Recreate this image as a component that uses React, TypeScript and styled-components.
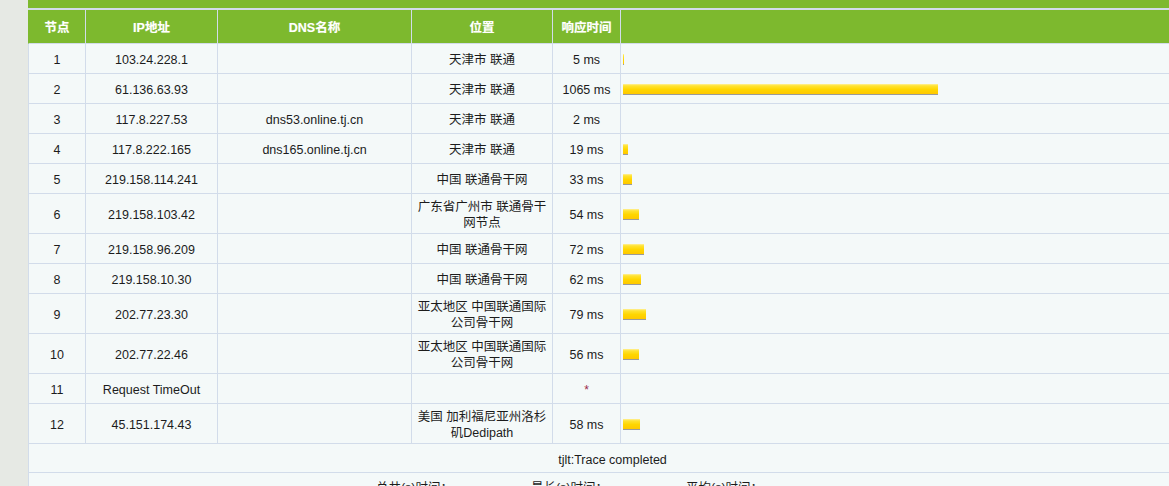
import React from "react";
import styled, { createGlobalStyle } from "styled-components";

const GlobalStyle = createGlobalStyle`
  html, body {
    margin: 0;
    padding: 0;
    background: #e6e9e4;
    overflow: hidden;
  }
  body {
    font-family: "Liberation Sans", "Noto Sans CJK SC", sans-serif;
    font-size: 12.5px;
    color: #1c1c1c;
  }
`;

const COLS = "57px 132px 194px 141px 68px 576px";
const GREEN = "#7db92e";
const LINE = "#d2dcea";

const Page = styled.div`
  padding-left: 28px;
  width: 1168px;
`;

const TitleBar = styled.div`
  height: 8px;
  background: ${GREEN};
  border-bottom: 2px solid ${LINE};
`;

const HeaderRow = styled.div`
  display: grid;
  grid-template-columns: ${COLS};
  background: ${GREEN};
  border-left: 1px solid ${GREEN};
  border-bottom: 1px solid ${LINE};
`;

const HeadCell = styled.div`
  height: 33px;
  display: flex;
  align-items: center;
  justify-content: center;
  color: #ffffff;
  font-weight: bold;
  font-size: 12.5px;
  border-right: 1px solid ${LINE};
  text-shadow: 0 0 1px rgba(255, 255, 255, 0.4);
  &:last-child {
    border-right: none;
  }
`;

const Row = styled.div`
  display: grid;
  grid-template-columns: ${COLS};
  background: #f4f9f9;
  border-left: 1px solid ${LINE};
  border-bottom: 1px solid ${LINE};
`;

const Cell = styled.div<{ $align?: "center" | "left" }>`
  min-height: 29px;
  box-sizing: border-box;
  padding: 5px 4px 2px;
  display: flex;
  align-items: center;
  justify-content: ${(p) => (p.$align === "left" ? "flex-start" : "center")};
  text-align: center;
  line-height: 16px;
  border-right: 1px solid ${LINE};
  &:last-child {
    border-right: none;
  }
`;

const BarCell = styled(Cell)`
  padding: 1px 2px 0;
`;

const Star = styled.span`
  color: #9b2a4a;
  font-size: 12px;
`;

const Bar = styled.div`
  height: 10px;
  background: linear-gradient(
    to bottom,
    #fff09a 0%,
    #ffe333 18%,
    #ffd600 55%,
    #ffc800 100%
  );
  border-bottom: 1px solid #9a9a9a;
`;

const WideRow = styled.div`
  min-height: 29px;
  box-sizing: border-box;
  padding: 5px 4px 2px;
  display: flex;
  align-items: center;
  justify-content: center;
  line-height: 16px;
  background: #f4f9f9;
  border-left: 1px solid ${LINE};
  border-bottom: 1px solid ${LINE};
`;

const SummaryRow = styled(WideRow)`
  gap: 78px;
  padding: 7px 86px 2px 0;
  align-items: flex-start;
`;

type Hop = {
  n: number;
  ip: string;
  dns: string;
  loc: string;
  ms: number | null;
};

const hops: Hop[] = [
  { n: 1, ip: "103.24.228.1", dns: "", loc: "天津市 联通", ms: 5 },
  { n: 2, ip: "61.136.63.93", dns: "", loc: "天津市 联通", ms: 1065 },
  { n: 3, ip: "117.8.227.53", dns: "dns53.online.tj.cn", loc: "天津市 联通", ms: 2 },
  { n: 4, ip: "117.8.222.165", dns: "dns165.online.tj.cn", loc: "天津市 联通", ms: 19 },
  { n: 5, ip: "219.158.114.241", dns: "", loc: "中国 联通骨干网", ms: 33 },
  { n: 6, ip: "219.158.103.42", dns: "", loc: "广东省广州市 联通骨干网节点", ms: 54 },
  { n: 7, ip: "219.158.96.209", dns: "", loc: "中国 联通骨干网", ms: 72 },
  { n: 8, ip: "219.158.10.30", dns: "", loc: "中国 联通骨干网", ms: 62 },
  { n: 9, ip: "202.77.23.30", dns: "", loc: "亚太地区 中国联通国际公司骨干网", ms: 79 },
  { n: 10, ip: "202.77.22.46", dns: "", loc: "亚太地区 中国联通国际公司骨干网", ms: 56 },
  { n: 11, ip: "Request TimeOut", dns: "", loc: "", ms: null },
  { n: 12, ip: "45.151.174.43", dns: "", loc: "美国 加利福尼亚州洛杉矶Dedipath", ms: 58 },
];

const barWidth = (ms: number) => Math.max(0, Math.round(ms * 0.2958 - 0.3));

export default function App() {
  return (
    <>
      <GlobalStyle />
      <Page>
        <TitleBar />
        <HeaderRow>
          <HeadCell>节点</HeadCell>
          <HeadCell>IP地址</HeadCell>
          <HeadCell>DNS名称</HeadCell>
          <HeadCell>位置</HeadCell>
          <HeadCell>响应时间</HeadCell>
          <HeadCell />
        </HeaderRow>
        {hops.map((h) => (
          <Row key={h.n}>
            <Cell>{h.n}</Cell>
            <Cell>{h.ip}</Cell>
            <Cell>{h.dns}</Cell>
            <Cell>{h.loc}</Cell>
            <Cell>{h.ms === null ? <Star>*</Star> : `${h.ms} ms`}</Cell>
            <BarCell $align="left">
              {h.ms !== null && barWidth(h.ms) > 0 && (
                <Bar style={{ width: barWidth(h.ms) }} />
              )}
            </BarCell>
          </Row>
        ))}
        <WideRow>tjlt:Trace completed</WideRow>
        <SummaryRow>
          <span>总共(s)时间：</span>
          <span>最长(s)时间：</span>
          <span>平均(s)时间：</span>
        </SummaryRow>
      </Page>
    </>
  );
}
